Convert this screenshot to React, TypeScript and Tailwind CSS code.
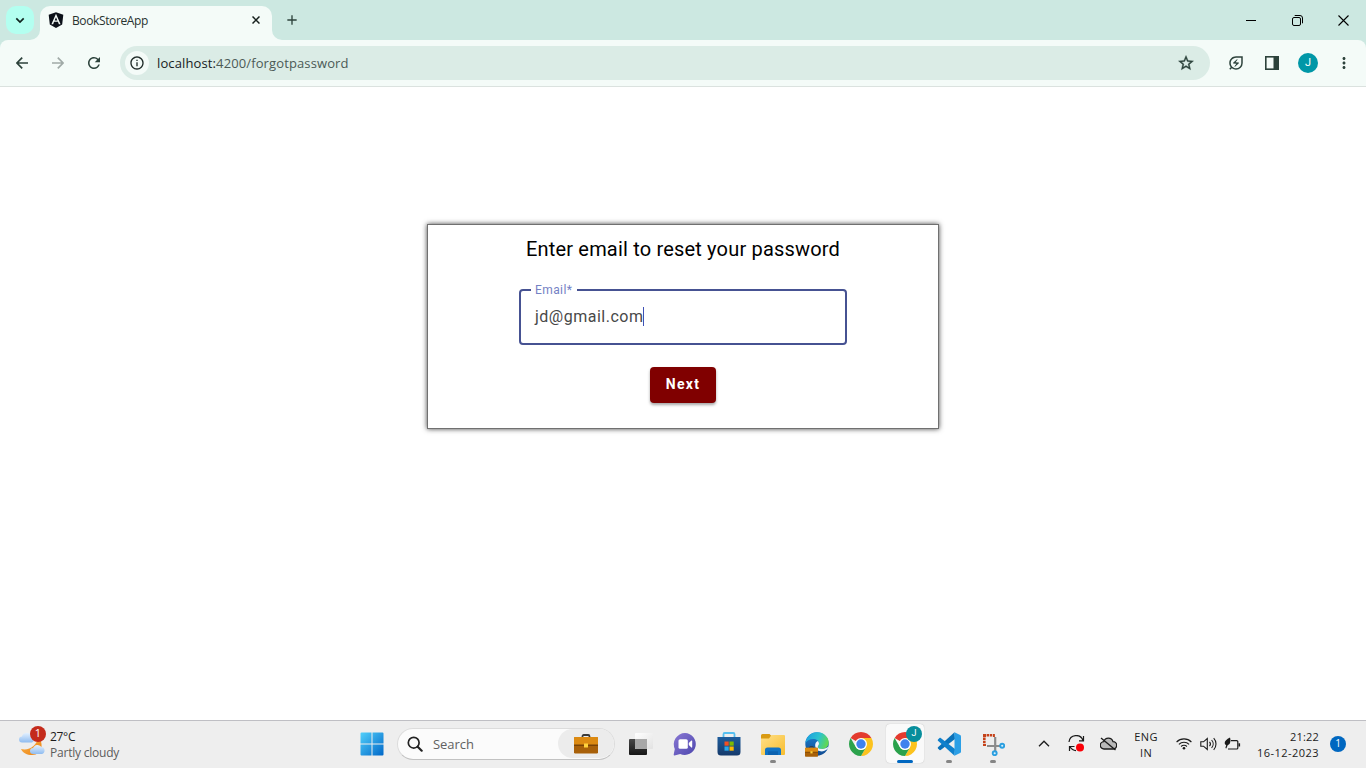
import React from "react";
import {
  MdRefresh,
  MdInfoOutline,
  MdStarOutline,
  MdMoreVert,
  MdOutlineEnergySavingsLeaf,
  MdAdd,
} from "react-icons/md";
import { FaAngular } from "react-icons/fa";

const segoe = "font-['Open_Sans','Noto_Sans',sans-serif]";

function TabStrip() {
  return (
    <div className="flex h-10 shrink-0 items-start bg-[#cce8e1] pl-[6px]">
      <div className="mt-[6px] flex size-7 items-center justify-center rounded-[10px] bg-[#b3fff0]">
        <svg width="10" height="7" viewBox="0 0 10 7" fill="none" stroke="#10241f" strokeWidth="1.7">
          <path d="M1.3 1.3 5 5l3.7-3.7" />
        </svg>
      </div>
      <div className="relative ml-[6px] mt-[6px] flex h-[34px] w-[232px] items-center rounded-t-[10px] bg-[#f4fbf8] pb-[6px] pl-2">
        <svg className="absolute -left-[10px] bottom-0" width="10" height="10" fill="#f4fbf8">
          <path d="M10 0v10H0A10 10 0 0 0 10 0Z" />
        </svg>
        <svg className="absolute -right-[10px] bottom-0" width="10" height="10" fill="#f4fbf8">
          <path d="M0 0v10h10A10 10 0 0 1 0 0Z" />
        </svg>
        <FaAngular className="size-[18px] -ml-px text-[#0c1119]" />
        <span className="ml-[7px] mt-px text-[12px] leading-4 tracking-[-0.38px] text-[#28322f]">BookStoreApp</span>
        <svg className="ml-auto mr-3" width="8" height="8" viewBox="0 0 8 8" stroke="#16201d" strokeWidth="1.500">
          <path d="M.5.5l7 7M7.500.5l-7 7" />
        </svg>
      </div>
      <MdAdd className="ml-[12px] mt-[12px] size-4 text-[#2c423b]" />
      <div className="ml-auto flex h-10 items-center">
        <div className="flex w-[46px] justify-center">
          <div className="h-px w-[10px] bg-black" />
        </div>
        <div className="flex w-[46px] justify-center">
          <svg width="11" height="11" viewBox="0 0 11 11" fill="none" stroke="#000">
            <rect x="0.5" y="2.5" width="8" height="8" rx="1.5" />
            <path d="M2.7.5h5.3a2.5 2.5 0 0 1 2.5 2.5v5.3" />
          </svg>
        </div>
        <div className="flex w-[46px] justify-center">
          <svg width="11" height="11" viewBox="0 0 11 11" stroke="#000" strokeWidth="1.1">
            <path d="M.5.5l10 10M10.5.5l-10 10" />
          </svg>
        </div>
      </div>
    </div>
  );
}

function ToolCell({ children }: { children: React.ReactNode }) {
  return <div className="flex w-9 items-center justify-center">{children}</div>;
}

function Toolbar() {
  return (
    <div className="shrink-0 bg-[#cce8e1]">
      <div className="flex h-[47px] items-stretch rounded-t-[8px] border-b border-[#dbe2df] bg-[#f4fbf8] px-1 pt-[6px] pb-[6px]">
        <ToolCell>
          <svg width="12" height="12" viewBox="0 0 12 12" fill="none" stroke="#2c423b" strokeWidth="1.700">
            <path d="M12 6H1.300M6.200.7.9 6l5.300 5.300" />
          </svg>
        </ToolCell>
        <ToolCell>
          <svg width="12" height="12" viewBox="0 0 12 12" fill="none" stroke="#a0aaa7" strokeWidth="1.700">
            <path d="M0 6h10.700M5.800.7 11.100 6l-5.300 5.300" />
          </svg>
        </ToolCell>
        <ToolCell>
          <MdRefresh className="size-[18px] text-[#2c423b]" />
        </ToolCell>
        <div className="ml-2 mr-2 flex flex-1 items-center rounded-full bg-[#dbece6] pl-[5px] pr-[15px]">
          <div className="flex size-6 items-center justify-center rounded-full bg-[#f4fbf8]">
            <MdInfoOutline className="size-4 text-[#1f2b28]" />
          </div>
          <span className="ml-2 text-[13px] leading-5 tracking-[0.12px] text-[#4b5a56]">
            <span className="text-[#17211e]">localhost:</span>4200/forgotpassword
          </span>
          <MdStarOutline className="ml-auto size-[18px] text-[#2c423b]" stroke="currentColor" strokeWidth="0.5" />
        </div>
        <ToolCell>
          <MdOutlineEnergySavingsLeaf className="size-[18px] text-[#2c423b]" />
        </ToolCell>
        <ToolCell>
          <svg width="14" height="14" viewBox="0 0 14 14">
            <rect x="0.8" y="0.8" width="12.4" height="12.4" fill="none" stroke="#2c423b" strokeWidth="1.6" />
            <rect x="8.500" y="1" width="4.500" height="12" fill="#2c423b" />
          </svg>
        </ToolCell>
        <ToolCell>
          <div className="flex size-5 items-center justify-center rounded-full bg-[#0097a7] pt-px font-['Roboto',sans-serif] text-[11px] text-white">J</div>
        </ToolCell>
        <ToolCell>
          <MdMoreVert className="size-[18px] text-[#2c423b]" />
        </ToolCell>
      </div>
    </div>
  );
}

function ResetCard() {
  return (
    <div className="mt-[137px] flex h-[205px] w-[512px] flex-col items-center border border-[#707070] bg-white font-['Roboto',sans-serif] shadow-[0_0_5px_#444]">
      <h1 className="mt-[8px] text-[20px] leading-8 tracking-[0.18px] text-black">Enter email to reset your password</h1>
      <div className="relative mt-[24px] flex h-[56px] w-[328px] items-center rounded-[4px] border-2 border-[#465292] pl-[14px]">
        <label className="absolute -top-[9px] left-[10px] bg-white pl-1 pr-[5px] text-[12px] leading-4 tracking-[0.4px] text-[#7481c4]">Email*</label>
        <span className="-mt-px text-[16px] leading-6 tracking-[0.5px] text-[#484848]">jd@gmail.com</span>
        <span className="-mt-px h-[19px] w-px bg-[#3f51b5]" />
      </div>
      <button className="mt-[22px] h-9 w-[66px] rounded-[4px] bg-[#800000] pb-[2px] text-[14px] font-bold tracking-[1.25px] text-white shadow-[0_2px_3px_rgba(0,0,0,0.35)]">
        Next
      </button>
    </div>
  );
}

function Weather() {
  return (
    <div className="flex w-[354px] items-center pl-[18px]">
      <div className="relative size-7">
        <svg width="28" height="28" viewBox="0 0 28 28">
          <defs>
            <linearGradient id="moon" x1="0" y1="0" x2="1" y2="1">
              <stop stopColor="#ffb84d" />
              <stop offset="1" stopColor="#e88012" />
            </linearGradient>
            <linearGradient id="cloud" x1="0" y1="0" x2="0" y2="1">
              <stop stopColor="#e4f1ff" />
              <stop offset="1" stopColor="#8fbcf0" />
            </linearGradient>
          </defs>
          <path d="M20 7c6 5 5 18-6 18-5 0-9-2-11-6 8 2 16-3 17-12Z" fill="url(#moon)" />
          <path d="M4 12.5a3 3 0 0 1 0-6 5 5 0 0 1 9-1.500a4 4 0 0 1 1 7.500Z" fill="url(#cloud)" />
          <path d="M15 24a3 3 0 0 1 0-6 5 5 0 0 1 8.500-1 3.600 3.600 0 0 1 .5 7Z" fill="url(#cloud)" />
        </svg>
        <div className="absolute -top-[4px] left-[12px] flex size-4 items-center justify-center rounded-full bg-[#c42b1c] text-[11px] text-white">1</div>
      </div>
      <div className="ml-[4px] mt-[2px] text-[12px] leading-4 text-[#1c1c1c]">
        <div className="tracking-[-0.3px]">27°C</div>
        <div className="tracking-[-0.22px] text-[#5c5c5c]">Partly cloudy</div>
      </div>
    </div>
  );
}

function WindowsLogo() {
  return (
    <svg width="24" height="24" viewBox="0 0 24 24">
      <defs>
        <linearGradient id="win" x1="0" y1="0" x2="1" y2="1">
          <stop stopColor="#52d0fb" />
          <stop offset="1" stopColor="#0067c8" />
        </linearGradient>
      </defs>
      <path d="M1.500.500H11.500V11.500H.500V1.500a1 1 0 0 1 1-1ZM12.500.500H22.500a1 1 0 0 1 1 1V11.500H12.500ZM.500 12.500H11.500V23.500H1.500a1 1 0 0 1-1-1ZM12.500 12.500H23.500V22.500a1 1 0 0 1-1 1H12.500Z" fill="url(#win)" />
    </svg>
  );
}

function Briefcase({ className }: { className?: string }) {
  return (
    <svg className={className} viewBox="0 0 24 20">
      <path d="M8.500 3.500V2.500C8.500 1.500 9 1 9.800 1h4.400c.8 0 1.300.5 1.300 1.500v1" fill="none" stroke="#3a3a3a" strokeWidth="1.800" />
      <rect x="0" y="3" width="24" height="16.500" rx="1.300" fill="#a86009" />
      <path d="M0 4.300A1.300 1.300 0 0 1 1.300 3h21.400A1.300 1.300 0 0 1 24 4.300V11H0Z" fill="#dc8a12" />
      <rect x="0" y="10.500" width="24" height="1.500" fill="#7a4304" />
      <rect x="10" y="9.500" width="4" height="4" fill="#ffd23c" />
    </svg>
  );
}

function SearchBox() {
  return (
    <div className="ml-[7px] flex h-8 w-[218px] items-center rounded-full border border-[#dcdcdc] border-b-[#c2c2c2] bg-[#fbfbfb] pl-[9px]">
      <svg width="16" height="16" viewBox="0 0 16 16" fill="none" stroke="#222">
        <circle cx="6.700" cy="6.700" r="5.400" strokeWidth="1.700" />
        <path d="m10.700 10.700 4 4" strokeWidth="2.100" strokeLinecap="round" />
      </svg>
      <span className="ml-[10px] mt-[2px] text-[13px] tracking-[-0.05px] text-[#616161]">Search</span>
      <div className="ml-auto flex h-[29px] w-[56px] items-center justify-center rounded-full bg-[#ececec]">
        <Briefcase className="h-5 w-6" />
      </div>
    </div>
  );
}

function TaskView() {
  return (
    <svg width="26" height="26" viewBox="0 0 26 26">
      <defs>
        <linearGradient id="tv" x1="0" y1="0" x2="0" y2="1">
          <stop stopColor="#484848" />
          <stop offset="1" stopColor="#161616" />
        </linearGradient>
        <linearGradient id="tv2" x1="0" y1="0" x2="1" y2="1">
          <stop stopColor="#ffffff" />
          <stop offset="1" stopColor="#e2e2e2" />
        </linearGradient>
      </defs>
      <rect x="1" y="8" width="18" height="16" rx="1" fill="url(#tv)" />
      <rect x="7" y="2" width="18" height="16" rx="1" fill="url(#tv2)" />
      <path d="M7 8h12v10H8a1 1 0 0 1-1-1Z" fill="#a8a8a8" />
    </svg>
  );
}

function Chat() {
  return (
    <svg width="24" height="24" viewBox="0 0 24 24">
      <defs>
        <linearGradient id="chat" x1="0" y1="0" x2="1" y2="1">
          <stop stopColor="#8a78d4" />
          <stop offset="1" stopColor="#4c46ad" />
        </linearGradient>
      </defs>
      <path d="M12 1a11 11 0 1 1-4.800 21L1.500 23.400c-.5.1-.9-.3-.8-.8L1.800 17A11.300 11.300 0 0 1 12 1Z" fill="url(#chat)" />
      <rect x="5.500" y="7.200" width="9.300" height="9.600" rx="1.600" fill="#fff" />
      <path d="m15.800 11 2.600-2.500c.3-.3.800 0 .8.400v6.200c0 .5-.5.700-.8.400L15.800 13Z" fill="#fff" />
    </svg>
  );
}

function Store() {
  return (
    <svg width="24" height="25" viewBox="0 0 24 25">
      <defs>
        <linearGradient id="store" x1="0" y1="0" x2="0" y2="1">
          <stop stopColor="#1d5c9c" />
          <stop offset="1" stopColor="#153a6b" />
        </linearGradient>
      </defs>
      <path d="M6.500 7V3.200A1.200 1.200 0 0 1 7.700 2h8.600a1.200 1.200 0 0 1 1.200 1.200V7" fill="none" stroke="#55bff0" strokeWidth="1.800" />
      <path d="M.5 6h23v15a3.500 3.500 0 0 1-3.500 3.500H4A3.500 3.500 0 0 1 .5 21Z" fill="url(#store)" />
      <path d="M7.500 10.500h4.200v4.200H7.500Z" fill="#f25022" />
      <path d="M12.500 10.500h4.200v4.200h-4.200Z" fill="#7fba00" />
      <path d="M7.500 15.500h4.200v4.200H7.500Z" fill="#28a8ea" />
      <path d="M12.500 15.500h4.200v4.200h-4.200Z" fill="#ffb900" />
    </svg>
  );
}

function Folder() {
  return (
    <svg width="26" height="24" viewBox="0 0 26 24">
      <defs>
        <linearGradient id="fold" x1="0" y1="0" x2="1" y2="1">
          <stop stopColor="#ffe08a" />
          <stop offset="1" stopColor="#f7bd2e" />
        </linearGradient>
      </defs>
      <path d="M1 3.500A1.500 1.500 0 0 1 2.500 2h7L12 4.500V8H1Z" fill="#d99a12" />
      <path d="M1 6.500h8L11.500 3H24a1 1 0 0 1 1 1V22a1 1 0 0 1-1 1H2a1 1 0 0 1-1-1Z" fill="url(#fold)" />
      <path d="M5 23v-5a2.500 2.500 0 0 1 2.500-2.500h11A2.500 2.500 0 0 1 21 18v5Z" fill="#1173c4" />
      <path d="M8 19.300h10V23H8Z" fill="#0c62b0" />
    </svg>
  );
}

function Edge() {
  return (
    <div className="relative size-6">
      <svg width="24" height="24" viewBox="0 0 24 24">
        <defs>
          <linearGradient id="edgeA" x1="0" y1="0.2" x2="1" y2="0.5">
            <stop stopColor="#1c9de0" />
            <stop offset="0.550" stopColor="#2bc3cf" />
            <stop offset="1" stopColor="#62d850" />
          </linearGradient>
          <linearGradient id="edgeB" x1="0" y1="0" x2="0" y2="1">
            <stop stopColor="#1c83d6" />
            <stop offset="1" stopColor="#114a8f" />
          </linearGradient>
        </defs>
        <circle cx="12" cy="12" r="11.700" fill="url(#edgeB)" />
        <path d="M.4 11C1 5 6 .3 12 .3c7 0 11.700 5 11.700 10 0 4-3 6.700-6.500 6.700-2.700 0-4.400-1-4.400-2 0-.7 1.200-1.200 1.200-3.200C14 9 11.500 7 8.300 7 4.500 7 1.700 9 .4 11Z" fill="url(#edgeA)" />
        <path d="M12.800 15c0 1 1.700 2 4.400 2 2.300 0 4.400-1 6.500-2.700-.3 1-.6 1.700-1.200 2.700-2.500 2-5 2.700-7 2.300-3-.5-5-2.500-5.300-5.300-.3-2.600 1-4.500 2.600-5 1 1 1.200 2 1.200 2.800 0 1.600-1.200 2-1.200 3.200Z" fill="#f2f7fb" />
      </svg>
      <Briefcase className="absolute -bottom-px left-0 h-[11px] w-[13px]" />
    </div>
  );
}

function Chrome() {
  return (
    <svg width="24" height="24" viewBox="0 0 24 24">
      <path d="M12 12 1.610 6A12 12 0 0 1 22.390 6Z" fill="#e33b2e" />
      <path d="M12 6H22.390A12 12 0 0 1 12 24L17.200 15Z" fill="#fcc31e" />
      <path d="M1.610 6 6.800 15A6 6 0 0 0 17.200 15L12 24A12 12 0 0 1 1.610 6Z" fill="#2ba24c" />
      <circle cx="12" cy="12" r="6" fill="#fff" />
      <circle cx="12" cy="12" r="4.700" fill="#3f82ee" />
    </svg>
  );
}

function Code() {
  return (
    <svg width="24" height="24" viewBox="0 0 24 24">
      <path d="M17.500.2 1 15.300a.9.9 0 0 0 0 1.300l1.500 1.300c.4.3.9.300 1.200.1L18 7Z" fill="#0b72b9" />
      <path d="M17.500 23.800 1 8.700a.9.900 0 0 1 0-1.300l1.500-1.300c.4-.3.900-.3 1.200-.1L18 17Z" fill="#0f80cc" />
      <path d="m17.500.2 5.600 2.700c.5.300.9.800.9 1.400v15.400c0 .6-.4 1.100-.9 1.400l-5.600 2.700Z" fill="#2b9fe6" />
    </svg>
  );
}

function Snip() {
  return (
    <svg width="24" height="24" viewBox="0 0 24 24">
      <path d="M2 2h3v3H2ZM5.600 2h2.600v2.600H5.600ZM8.900 2h2.300v2.600H8.900ZM11.900 2h2v3h-2ZM2 5.600h2.600v2.600H2ZM2 8.900h2.600v2.300H2ZM2 11.900h3v2H2Z" fill="#c5421a" />
      <path d="M14.200 5V19M6 14H19" stroke="#8b8b8b" strokeWidth="2.200" />
      <circle cx="13.700" cy="21.200" r="2" fill="#d9effb" stroke="#2b9fe0" strokeWidth="1.900" />
      <circle cx="21.200" cy="13.700" r="2" fill="#d9effb" stroke="#2b9fe0" strokeWidth="1.900" />
    </svg>
  );
}

function TaskbarApp({ children, running, active }: { children: React.ReactNode; running?: boolean; active?: boolean }) {
  return (
    <div className="flex w-11 justify-center">
      <div className={active ? "relative flex h-[39px] w-[38px] items-center justify-center rounded-[4px] bg-[#fafafa] shadow-[0_0_1px_#aaa]" : "relative flex h-[39px] w-[38px] items-center justify-center"}>
        {children}
        {running && <div className="absolute bottom-0 left-[16px] h-[3px] w-[6px] rounded-full bg-[#858585]" />}
        {active && <div className="absolute bottom-0 left-[11px] h-[3px] w-4 rounded-full bg-[#0067c0]" />}
      </div>
    </div>
  );
}

function Tray() {
  return (
    <div className="ml-auto flex items-center pr-5 text-[#1b1b1b]">
      <div className="flex w-8 justify-center">
        <svg width="12" height="7" viewBox="0 0 12 7" fill="none" stroke="#1b1b1b" strokeWidth="1.300">
          <path d="M1 6.200 6 1.200l5 5" />
        </svg>
      </div>
      <div className="flex w-8 justify-center">
        <svg width="17" height="17" viewBox="0 0 17 17" fill="none" stroke="#1b1b1b" strokeWidth="1.200">
          <path d="M1 7A7.200 7.200 0 0 1 15 5.500M15.500 1v4.800H11M1.500 16v-4.500h5M2 11.800C3.300 14 5 15.500 8 15.600" />
          <circle cx="12" cy="12.500" r="4" fill="#fb0007" stroke="none" />
        </svg>
      </div>
      <div className="flex w-8 justify-center">
        <svg width="17" height="14" viewBox="0 0 17 14" fill="#b9b9b9" stroke="#1b1b1b" strokeWidth="1.300">
          <path d="M4.200 12a3.700 3.700 0 0 1-.4-7.400 4.800 4.800 0 0 1 9.200 0 3.700 3.700 0 0 1 0 7.400Z" />
          <path d="m1 1 14.500 12" />
        </svg>
      </div>
      <div className="mt-[2px] w-11 text-center text-[11px] leading-4 tracking-[0.4px]">
        <div>ENG</div>
        <div>IN</div>
      </div>
      <div className="ml-1 flex w-6 justify-center">
        <svg width="16" height="13" viewBox="0 0 16 13" fill="none" stroke="#1b1b1b" strokeWidth="1.100">
          <path d="M.6 5a10.400 10.400 0 0 1 14.800 0M2.900 7.300a7.200 7.200 0 0 1 10.200 0M5.100 9.500a4.100 4.100 0 0 1 5.800 0" />
          <circle cx="8" cy="11.200" r="1.300" fill="#1b1b1b" stroke="none" />
        </svg>
      </div>
      <div className="flex w-6 justify-center">
        <svg width="17" height="14" viewBox="0 0 17 14" fill="none" stroke="#1b1b1b" strokeWidth="1.100">
          <path d="M.8 4.800h2.700L7.300 1.500v11L3.500 9.200H.8Z" />
          <path d="M9.500 4.800a3.300 3.300 0 0 1 0 4.400M11.600 3a6 6 0 0 1 0 8M13.700 1.200a8.500 8.500 0 0 1 0 11.600" />
        </svg>
      </div>
      <div className="flex w-6 justify-center">
        <svg width="17" height="14" viewBox="0 0 17 14" fill="none" stroke="#1b1b1b" strokeWidth="1.200">
          <path d="M7 3.700h5.800a1 1 0 0 1 1 1v6.300a1 1 0 0 1-1 1H4" />
          <path d="M15.300 6.300v3.200" strokeWidth="1.600" />
          <path d="M6 .5C7 3.500 6.500 7.500 3.800 8L2.300 11.500l-.9-.4L2.200 8C-.8 6.500.8 3 6 .5Z" fill="#1b1b1b" stroke="none" />
        </svg>
      </div>
      <div className="mt-[2px] w-[75px] text-right text-[11px] leading-4">
        <div className="tracking-[0.2px]">21:22</div>
        <div className="tracking-[0.45px]">16-12-2023</div>
      </div>
      <div className="ml-[11px] flex size-4 items-center justify-center rounded-full bg-[#0067c0] text-[10px] text-white">1</div>
    </div>
  );
}

function Taskbar() {
  return (
    <div className="flex h-12 shrink-0 items-stretch border-t border-[#bfbfc4] bg-[#eeeeee] pb-[2px]">
      <Weather />
      <div className="flex items-center">
        <div className="flex w-9 justify-center">
          <WindowsLogo />
        </div>
        <SearchBox />
        <div className="ml-[4px] flex">
          <TaskbarApp><TaskView /></TaskbarApp>
          <TaskbarApp><Chat /></TaskbarApp>
          <TaskbarApp><Store /></TaskbarApp>
          <TaskbarApp running><Folder /></TaskbarApp>
          <TaskbarApp><Edge /></TaskbarApp>
          <TaskbarApp><Chrome /></TaskbarApp>
          <TaskbarApp active>
            <Chrome />
            <div className="absolute left-[20px] top-[2px] flex size-4 items-center justify-center rounded-full bg-[#078e9c] font-['Roboto',sans-serif] text-[9px] text-white">J</div>
          </TaskbarApp>
          <TaskbarApp running><Code /></TaskbarApp>
          <TaskbarApp running><Snip /></TaskbarApp>
        </div>
      </div>
      <Tray />
    </div>
  );
}

export default function App() {
  return (
    <div className={`flex h-[768px] w-[1366px] flex-col overflow-hidden bg-white ${segoe}`}>
      <TabStrip />
      <Toolbar />
      <main className="flex flex-1 items-start justify-center">
        <ResetCard />
      </main>
      <Taskbar />
    </div>
  );
}
